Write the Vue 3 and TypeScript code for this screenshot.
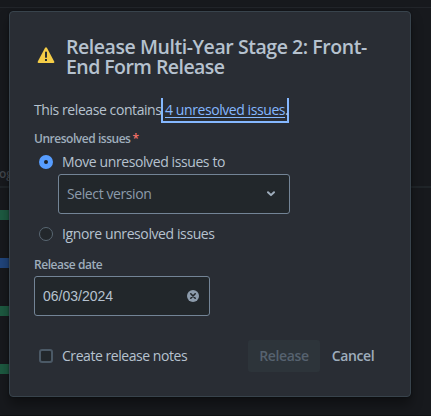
<script setup lang="ts">
import { ref } from 'vue'

type Mode = 'move' | 'ignore'

const mode = ref<Mode>('move')
const releaseDate = ref('06/03/2024')
const notes = ref(false)
const bars = [
  { top: 210, tone: 'green' },
  { top: 258, tone: 'blue' },
  { top: 306, tone: 'green' },
  { top: 364, tone: 'green' },
]
</script>

<template>
  <div class="page">
    <div class="rule top-rule"></div>
    <div class="rule mid-rule"></div>
    <div class="rule bottom-rule"></div>
    <span class="column-name">og</span>
    <span v-for="bar in bars" :key="bar.top" class="bar" :class="bar.tone" :style="{ top: bar.top + 'px' }"></span>

    <section class="dialog" role="dialog">
      <header class="head">
        <svg class="warning" width="18" height="17" viewBox="0 0 18 17">
          <path d="M8.1.8Q9 -.3 9.9.8L17.2 14.6Q17.7 16 16.4 16H1.6Q.3 16 .8 14.6Z" fill="#f5cd47" />
          <rect x="8" y="4.7" width="2" height="6" fill="#282e33" />
          <rect x="8" y="12" width="2" height="2" fill="#282e33" />
        </svg>
        <h1 class="title"><span class="line l1">Release Multi-Year Stage 2: Front-</span><span class="line l2">End Form Release</span></h1>
      </header>

      <p class="summary"><span class="intro">This release contains</span><span class="focus"><a class="link">4 unresolved issues</a>.</span></p>

      <div class="label unresolved"><span>Unresolved issues</span><i class="required">*</i></div>
      <div class="choice" @click="mode = 'move'">
        <span class="radio" :class="{ on: mode === 'move' }"></span><span class="t-move">Move unresolved issues to</span>
      </div>
      <div class="select">
        <span class="placeholder">Select version</span>
        <svg width="8" height="6" viewBox="0 0 8 6"><path d="M1 1.2 4 4.1 7 1.2" fill="none" stroke="#9fadbc" stroke-width="2" stroke-linecap="round" stroke-linejoin="round" /></svg>
      </div>
      <div class="choice second" @click="mode = 'ignore'">
        <span class="radio" :class="{ on: mode === 'ignore' }"></span><span class="t-ignore">Ignore unresolved issues</span>
      </div>

      <div class="label date-label">Release date</div>
      <div class="date">
        <span>{{ releaseDate }}</span>
        <svg width="12" height="12" viewBox="0 0 12 12" @click="releaseDate = ''"><circle cx="6" cy="6" r="6" fill="#8c9bab" /><path d="M3.8 3.8 8.2 8.2M8.2 3.8 3.8 8.2" stroke="#22272b" stroke-width="1.6" stroke-linecap="round" /></svg>
      </div>

      <footer class="foot">
        <span class="check" @click="notes = !notes"></span>
        <span class="t-notes">Create release notes</span>
        <button class="button release" disabled><span>Release</span></button>
        <button class="button cancel"><span>Cancel</span></button>
      </footer>
    </section>
  </div>
</template>

<style>
body { background: #161a1d; overflow: hidden; }
</style>

<style scoped>
* { box-sizing: border-box; }
.page {
  position: relative;
  width: 431px;
  height: 416px;
  padding: 11px 0 0 9px;
  overflow: hidden;
  background: #17191d;
  font-family: "Open Sans", "Noto Sans", sans-serif;
  font-size: 14px;
  color: #b6c2cf;
  white-space: nowrap;
}
.rule { position: absolute; left: 0; right: 0; height: 1px; background: #22252a; }
.top-rule { top: 7px; }
.mid-rule { top: 186px; height: 2px; background: #1f2428; }
.bottom-rule { top: 415px; background: #101214; }
.column-name { position: absolute; left: -1px; top: 166px; font-size: 12px; line-height: 16px; font-weight: 600; color: #42474d; }
.bar { position: absolute; left: 0; width: 12px; height: 10px; }
.green { background: #1d5a41; }
.blue { background: #20457c; }
.dialog {
  position: relative;
  width: 402px;
  height: 386px;
  padding: 25px 24px 0;
  border: 1px solid #38434c;
  border-radius: 4px;
  background: #292d34;
  box-shadow: 0 8px 12px rgba(3, 4, 4, .36), 0 0 2px rgba(3, 4, 4, .5);
}
.head { display: flex; height: 50px; }
.warning { margin: 10px 11px 0 3px; flex: none; }
.title { margin: 0; font-size: 19.5px; line-height: 20px; font-weight: 600; color: #b6c2cf; }
.line { display: block; }
.l1 { letter-spacing: -.44px; }
.l2 { letter-spacing: -.55px; }
.summary { display: flex; margin: 11px 0 0; height: 25px; line-height: 23px; }
.intro { width: 127px; letter-spacing: -.42px; }
.focus { width: 128px; padding-left: 2px; border: 2px solid #85b8ff; border-top: 0; letter-spacing: -.42px; }
.link { color: #85b8ff; text-decoration: underline; text-underline-offset: 2px; text-decoration-thickness: 1px; }
.label { display: flex; height: 16px; font-size: 12px; line-height: 16px; font-weight: 600; color: #9fadbc; letter-spacing: -.47px; }
.unresolved { margin-top: 8px; }
.required { margin-left: 2px; font-style: normal; color: #f87168; }
.choice { display: flex; align-items: center; gap: 9px; height: 20px; margin-top: 5px; padding-left: 5px; }
.radio { width: 14px; height: 14px; border: 1px solid #596773; border-radius: 50%; background: #22272b; }
.radio.on { border: 5px solid #579dff; background: #1d2125; }
.select {
  display: flex; align-items: center; justify-content: space-between;
  width: 232px; height: 40px; margin: 2px 0 0 24px; padding: 0 14px 0 8px;
  border: 1px solid #738496; border-radius: 3px; background: #22272b; color: #8c9bab;
}
.second { margin-top: 10px; }
.date-label { margin-top: 13px; }
.date {
  display: flex; align-items: center; justify-content: space-between;
  width: 176px; height: 40px; margin-top: 3px; padding: 0 10px 0 8px;
  border: 1px solid #738496; border-radius: 3px; background: #22272b;
  font-family: "Liberation Sans", Arial, sans-serif;
}
.foot { display: flex; align-items: center; height: 32px; margin-top: 24px; padding-left: 5px; }
.check { width: 14px; height: 14px; margin-right: 9px; border: 2px solid #4b5966; border-radius: 3px; background: #22272b; }
.t-notes { width: 186px; }
.button { height: 32px; padding: 0; border: 0; border-radius: 3px; background: none; font: 600 14px/32px "Open Sans", sans-serif; color: #9fadbc; letter-spacing: -.35px; }
.release { width: 72px; background: #2d343a; color: #56626f; }
.cancel { width: 66px; }
.placeholder, .t-move, .t-ignore, .t-notes { padding-bottom: 2px; letter-spacing: -.4px; }
.t-notes { letter-spacing: -.45px; }
</style>
